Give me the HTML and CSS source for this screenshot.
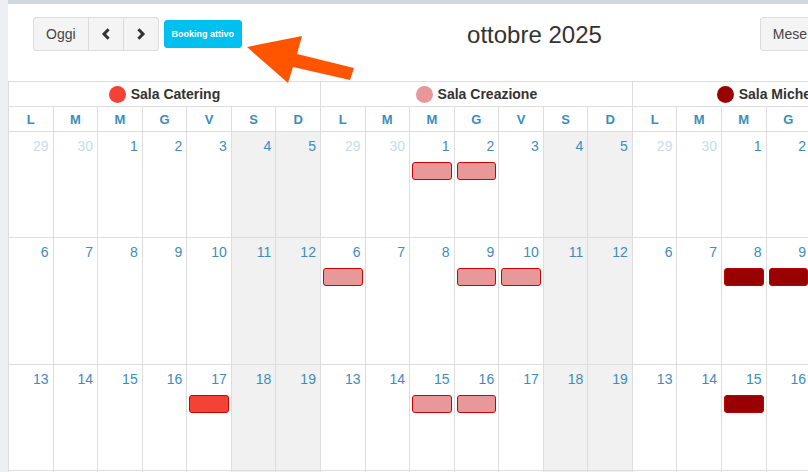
FILE: index.html
```html
<!DOCTYPE html>
<html lang="it">
<head>
<meta charset="utf-8">
<title>Calendario sale</title>
<link rel="stylesheet" href="styles.css">
</head>
<body>
<div class="box">
  <div class="toolbar">
    <div class="left">
      <div class="btn-group">
        <button class="btn">Oggi</button>
        <button class="btn icon"><svg width="10" height="12" viewBox="0 0 10 12"><polyline points="7.6,1.2 3,6 7.6,10.8" fill="none" stroke="#333" stroke-width="3"/></svg></button>
        <button class="btn icon"><svg width="10" height="12" viewBox="0 0 10 12"><polyline points="2.4,1.2 7,6 2.4,10.8" fill="none" stroke="#333" stroke-width="3"/></svg></button>
      </div>
      <button class="btn-booking">Booking attivo</button>
    </div>
    <h2 class="title">ottobre 2025</h2>
    <div class="btn-group views">
      <button class="btn">Mese</button>
      <button class="btn">Settimana</button>
      <button class="btn">Giorno</button>
    </div>
  </div>

  <div class="cal">
    <div class="res"><span class="dot dot-cat"></span>Sala Catering</div>
    <div class="res"><span class="dot dot-crea"></span>Sala Creazione</div>
    <div class="res"><span class="dot dot-mic"></span>Sala Michelangelo</div>

    <div class="dow">L</div><div class="dow">M</div><div class="dow">M</div><div class="dow">G</div><div class="dow">V</div><div class="dow">S</div><div class="dow">D</div>
    <div class="dow">L</div><div class="dow">M</div><div class="dow">M</div><div class="dow">G</div><div class="dow">V</div><div class="dow">S</div><div class="dow">D</div>
    <div class="dow">L</div><div class="dow">M</div><div class="dow">M</div><div class="dow">G</div><div class="dow">V</div><div class="dow">S</div><div class="dow">D</div>

    <!-- week 1 -->
    <div class="day other"><span class="num">29</span></div>
    <div class="day other"><span class="num">30</span></div>
    <div class="day"><span class="num">1</span></div>
    <div class="day"><span class="num">2</span></div>
    <div class="day"><span class="num">3</span></div>
    <div class="day we"><span class="num">4</span></div>
    <div class="day we"><span class="num">5</span></div>

    <div class="day other"><span class="num">29</span></div>
    <div class="day other"><span class="num">30</span></div>
    <div class="day"><span class="num">1</span><div class="ev ev-crea"></div></div>
    <div class="day"><span class="num">2</span><div class="ev ev-crea"></div></div>
    <div class="day"><span class="num">3</span></div>
    <div class="day we"><span class="num">4</span></div>
    <div class="day we"><span class="num">5</span></div>

    <div class="day other"><span class="num">29</span></div>
    <div class="day other"><span class="num">30</span></div>
    <div class="day"><span class="num">1</span></div>
    <div class="day"><span class="num">2</span></div>
    <div class="day"><span class="num">3</span></div>
    <div class="day we"><span class="num">4</span></div>
    <div class="day we"><span class="num">5</span></div>

    <!-- week 2 -->
    <div class="day"><span class="num">6</span></div>
    <div class="day"><span class="num">7</span></div>
    <div class="day"><span class="num">8</span></div>
    <div class="day"><span class="num">9</span></div>
    <div class="day"><span class="num">10</span></div>
    <div class="day we"><span class="num">11</span></div>
    <div class="day we"><span class="num">12</span></div>

    <div class="day"><span class="num">6</span><div class="ev ev-crea"></div></div>
    <div class="day"><span class="num">7</span></div>
    <div class="day"><span class="num">8</span></div>
    <div class="day"><span class="num">9</span><div class="ev ev-crea"></div></div>
    <div class="day"><span class="num">10</span><div class="ev ev-crea"></div></div>
    <div class="day we"><span class="num">11</span></div>
    <div class="day we"><span class="num">12</span></div>

    <div class="day"><span class="num">6</span></div>
    <div class="day"><span class="num">7</span></div>
    <div class="day"><span class="num">8</span><div class="ev ev-mic"></div></div>
    <div class="day"><span class="num">9</span><div class="ev ev-mic"></div></div>
    <div class="day"><span class="num">10</span></div>
    <div class="day we"><span class="num">11</span></div>
    <div class="day we"><span class="num">12</span></div>

    <!-- week 3 -->
    <div class="day"><span class="num">13</span></div>
    <div class="day"><span class="num">14</span></div>
    <div class="day"><span class="num">15</span></div>
    <div class="day"><span class="num">16</span></div>
    <div class="day"><span class="num">17</span><div class="ev ev-cat"></div></div>
    <div class="day we"><span class="num">18</span></div>
    <div class="day we"><span class="num">19</span></div>

    <div class="day"><span class="num">13</span></div>
    <div class="day"><span class="num">14</span></div>
    <div class="day"><span class="num">15</span><div class="ev ev-crea"></div></div>
    <div class="day"><span class="num">16</span><div class="ev ev-crea"></div></div>
    <div class="day"><span class="num">17</span></div>
    <div class="day we"><span class="num">18</span></div>
    <div class="day we"><span class="num">19</span></div>

    <div class="day"><span class="num">13</span></div>
    <div class="day"><span class="num">14</span></div>
    <div class="day"><span class="num">15</span><div class="ev ev-mic"></div></div>
    <div class="day"><span class="num">16</span></div>
    <div class="day"><span class="num">17</span></div>
    <div class="day we"><span class="num">18</span></div>
    <div class="day we"><span class="num">19</span></div>

    <!-- week 4 -->
    <div class="day"><span class="num">20</span></div>
    <div class="day"><span class="num">21</span></div>
    <div class="day"><span class="num">22</span></div>
    <div class="day"><span class="num">23</span></div>
    <div class="day"><span class="num">24</span></div>
    <div class="day we"><span class="num">25</span></div>
    <div class="day we"><span class="num">26</span></div>

    <div class="day"><span class="num">20</span></div>
    <div class="day"><span class="num">21</span></div>
    <div class="day"><span class="num">22</span></div>
    <div class="day"><span class="num">23</span></div>
    <div class="day"><span class="num">24</span></div>
    <div class="day we"><span class="num">25</span></div>
    <div class="day we"><span class="num">26</span></div>

    <div class="day"><span class="num">20</span></div>
    <div class="day"><span class="num">21</span></div>
    <div class="day"><span class="num">22</span></div>
    <div class="day"><span class="num">23</span></div>
    <div class="day"><span class="num">24</span></div>
    <div class="day we"><span class="num">25</span></div>
    <div class="day we"><span class="num">26</span></div>
  </div>

  <svg class="arrow" width="120" height="60" viewBox="0 0 120 60">
    <polygon points="7,17 62,6 57,24 114,38 110,50 53,37 48,53" fill="#ff5400"/>
  </svg>
</div>
</body>
</html>
```

FILE: styles.css
```css
html, body {
  margin: 0;
  padding: 0;
  height: 100%;
  overflow: hidden;
}

body {
  background: #ecf0f5;
  font-family: "Liberation Sans", Arial, sans-serif;
  color: #333;
}

.box {
  position: relative;
  margin-left: 8px;
  width: 1100px;
  height: 520px;
  background: #fff;
  border-top: 4px solid #d2d6de;
  overflow: hidden;
}

.toolbar {
  display: flex;
  align-items: flex-start;
  padding: 13px 0 0 25px;
  height: 36px;
  margin-bottom: 28px;
}

.left {
  display: flex;
  align-items: center;
  height: 34px;
  flex-shrink: 0;
}

.btn-group {
  display: flex;
  flex-shrink: 0;
}

.btn {
  display: flex;
  align-items: center;
  height: 34px;
  box-sizing: border-box;
  margin: 0;
  padding: 0 12px;
  font-family: inherit;
  font-size: 14px;
  color: #444;
  background: #f4f4f4;
  border: 1px solid #ddd;
  border-radius: 0;
  white-space: nowrap;
}

.btn + .btn {
  margin-left: -1px;
}

.btn:first-child {
  border-radius: 3px 0 0 3px;
}

.btn:last-child {
  border-radius: 0 3px 3px 0;
}

.btn svg {
  display: block;
}

.btn-booking {
  margin: 0 0 0 5px;
  height: 28px;
  box-sizing: border-box;
  padding: 0 7px;
  font-family: inherit;
  font-size: 9px;
  font-weight: bold;
  color: #fff;
  background: #00c0ef;
  border: 1px solid #00bde9;
  border-radius: 3px;
  white-space: nowrap;
}

.title {
  margin: 0 0 0 225px;
  font-size: 24px;
  font-weight: normal;
  line-height: 36px;
  color: #333;
  white-space: nowrap;
  flex-shrink: 0;
}

.views {
  margin-left: 158px;
}

.cal {
  display: grid;
  grid-template-columns: repeat(21, 44.57px);
  grid-template-rows: 25px 25px 106px 127px 106px 106px;
  border-top: 1px solid #ddd;
}

.cal > div {
  box-sizing: border-box;
  border-left: 1px solid #ddd;
  border-bottom: 1px solid #ddd;
}

.res {
  grid-column: span 7;
  display: flex;
  justify-content: center;
  align-items: center;
  gap: 5px;
  font-size: 14px;
  font-weight: bold;
  color: #333;
  white-space: nowrap;
}

.dot {
  width: 17px;
  height: 17px;
  border-radius: 50%;
  flex-shrink: 0;
}

.dot-cat { background: #f44336; }
.dot-crea { background: #e89898; }
.dot-mic { background: #990000; }

.dow {
  display: flex;
  justify-content: center;
  align-items: center;
  font-size: 13px;
  font-weight: bold;
  color: #3c8dbc;
}

.day {
  background: #fff;
}

.day.we {
  background: #f1f1f1;
}

.num {
  display: block;
  padding: 4px 4px 0 0;
  text-align: right;
  font-size: 14px;
  line-height: 20px;
  color: #3c8dbc;
}

.other .num {
  opacity: 0.3;
}

.ev {
  height: 18px;
  box-sizing: border-box;
  margin: 6px 2px 0 2px;
  border: 1px solid #cc0000;
  border-radius: 3px;
}

.ev-crea { background: #e89898; }
.ev-cat { background: #f44336; }
.ev-mic { background: #990000; border-color: #b80000; }

.arrow {
  position: absolute;
  left: 232px;
  top: 26px;
  z-index: 2;
}
```
